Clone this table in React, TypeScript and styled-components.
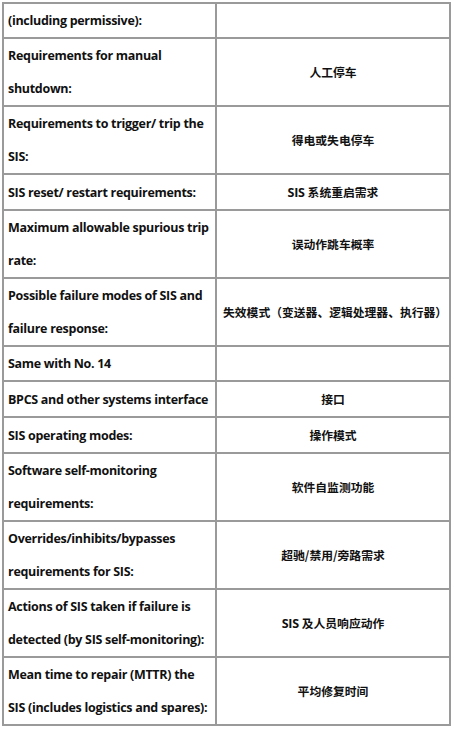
import React from "react";
import styled, { createGlobalStyle } from "styled-components";

const GlobalStyle = createGlobalStyle`
  html, body {
    margin: 0;
    padding: 0;
    background: #ffffff;
  }
  body {
    font-family: "Open Sans", "Noto Sans CJK SC", sans-serif;
  }
`;

const Page = styled.div`
  padding: 2px 0 0 2px;
  width: 454px;
  box-sizing: border-box;
`;

const Table = styled.table`
  border-collapse: separate;
  border-spacing: 0;
  border-top: 2px solid #9a9a9a;
  border-left: 2px solid #9a9a9a;
  width: 449px;
  table-layout: fixed;
`;

const Cell = styled.td<{ $align?: "left" | "center" }>`
  border-right: 2px solid #9a9a9a;
  border-bottom: 2px solid #9a9a9a;
  padding: 0 4px;
  vertical-align: middle;
  text-align: ${(p) => p.$align ?? "left"};
  color: #111;
  font-weight: 700;
  font-size: 12.5px;
  line-height: 33px;
  letter-spacing: -0.3px;
  white-space: nowrap;
`;

const Line = styled.div`
  display: block;
`;

const CnText = styled.span<{ $shift?: boolean }>`
  font-family: "Noto Sans CJK SC", sans-serif;
  font-size: 11.8px;
  font-weight: 700;
  letter-spacing: 0;
  padding-left: ${(p) => (p.$shift ? "2px" : "0")};
`;

type Row = { left: string[]; right: string };

const rows: Row[] = [
  { left: ["(including permissive):"], right: "" },
  { left: ["Requirements for manual", "shutdown:"], right: "人工停车" },
  { left: ["Requirements to trigger/ trip the", "SIS:"], right: "得电或失电停车" },
  { left: ["SIS reset/ restart requirements:"], right: "SIS 系统重启需求" },
  { left: ["Maximum allowable spurious trip", "rate:"], right: "误动作跳车概率" },
  {
    left: ["Possible failure modes of SIS and", "failure response:"],
    right: "失效模式（变送器、逻辑处理器、执行器）",
  },
  { left: ["Same with No. 14"], right: "" },
  { left: ["BPCS and other systems interface"], right: "接口" },
  { left: ["SIS operating modes:"], right: "操作模式" },
  { left: ["Software self-monitoring", "requirements:"], right: "软件自监测功能" },
  { left: ["Overrides/inhibits/bypasses", "requirements for SIS:"], right: "超驰/禁用/旁路需求" },
  {
    left: ["Actions of SIS taken if failure is", "detected (by SIS self-monitoring):"],
    right: "SIS 及人员响应动作",
  },
  {
    left: ["Mean time to repair (MTTR) the", "SIS (includes logistics and spares):"],
    right: "平均修复时间",
  },
];

const LeftCol = styled.col`
  width: 213px;
`;

const RightCol = styled.col`
  width: 234px;
`;

function renderRight(text: string) {
  if (text.startsWith("SIS ")) {
    return (
      <>
        SIS <CnText>{text.slice(4)}</CnText>
      </>
    );
  }
  return <CnText $shift={text.endsWith("）")}>{text}</CnText>;
}

export default function App() {
  return (
    <>
      <GlobalStyle />
      <Page>
        <Table>
          <colgroup>
            <LeftCol />
            <RightCol />
          </colgroup>
          <tbody>
            {rows.map((r, i) => (
              <tr key={i}>
                <Cell>
                  {r.left.map((l, j) => (
                    <Line key={j}>{l}</Line>
                  ))}
                </Cell>
                <Cell $align="center">{r.right ? renderRight(r.right) : "\u00a0"}</Cell>
              </tr>
            ))}
          </tbody>
        </Table>
      </Page>
    </>
  );
}
